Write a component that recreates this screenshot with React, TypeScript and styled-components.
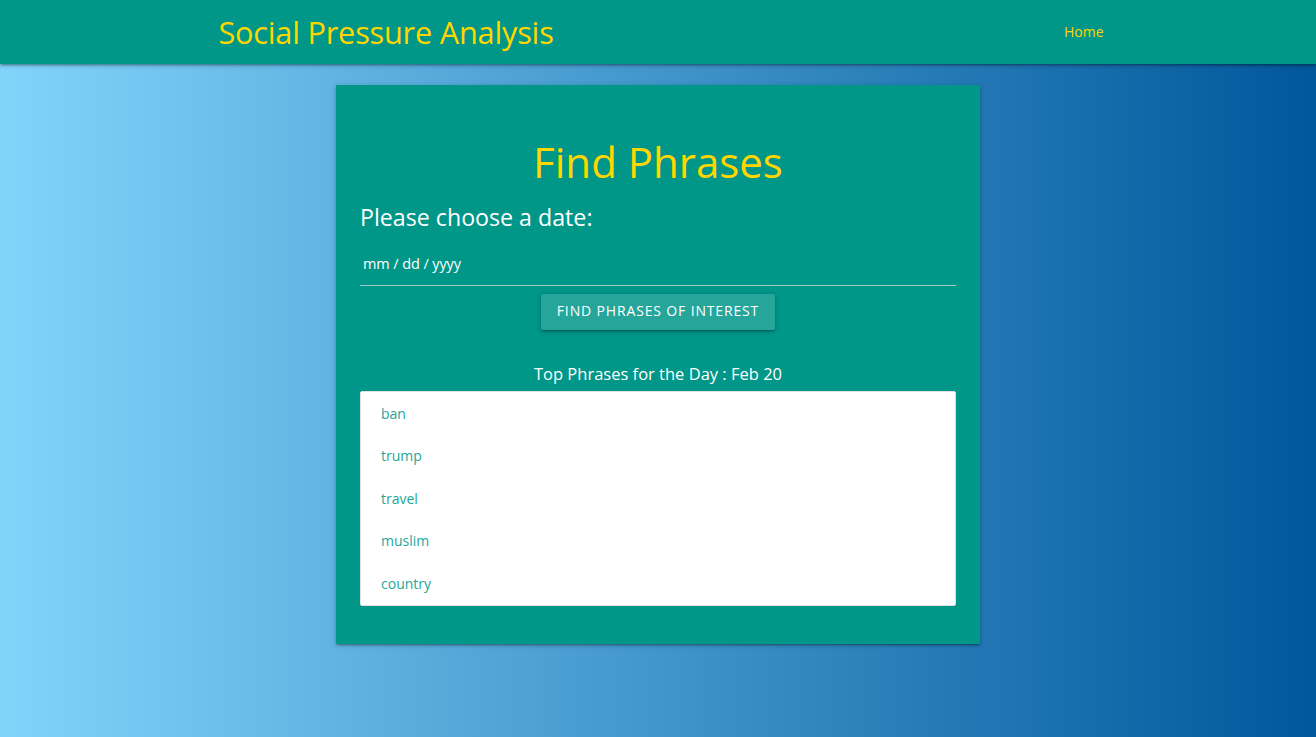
import React from 'react';
import styled, { createGlobalStyle } from 'styled-components';

const GlobalStyle = createGlobalStyle`
  html, body {
    margin: 0;
    padding: 0;
    min-height: 100%;
  }
  body {
    font-family: "Open Sans", "Noto Sans", sans-serif;
    background: linear-gradient(to right, #81d4fa 0%, #01579b 100%);
    min-height: 737px;
  }
  * {
    box-sizing: border-box;
  }
`;

const Nav = styled.nav`
  height: 64px;
  background-color: #009688;
  box-shadow: 0 2px 2px 0 rgba(0, 0, 0, 0.14), 0 3px 1px -2px rgba(0, 0, 0, 0.12),
    0 1px 5px 0 rgba(0, 0, 0, 0.2);
`;

const NavWrapper = styled.div`
  width: 70%;
  margin: 0 auto;
  height: 100%;
  display: flex;
  align-items: center;
  justify-content: space-between;
  padding-left: 21px;
`;

const Brand = styled.a`
  color: #ffd600;
  font-size: 30.7px;
  letter-spacing: -0.2px;
  text-decoration: none;
  line-height: 64px;
`;

const NavLink = styled.a`
  color: #ffd600;
  font-size: 14px;
  text-decoration: none;
  padding: 0 15px;
  line-height: 64px;
`;

const Main = styled.main`
  display: flex;
  justify-content: center;
  padding-top: 21px;
`;

const Card = styled.section`
  width: 644px;
  background-color: #009688;
  padding: 44px 24px 38px;
  box-shadow: 0 2px 2px 0 rgba(0, 0, 0, 0.14), 0 3px 1px -2px rgba(0, 0, 0, 0.12),
    0 1px 5px 0 rgba(0, 0, 0, 0.2);
  display: flex;
  flex-direction: column;
`;

const Title = styled.h1`
  margin: 0;
  text-align: center;
  color: #ffd600;
  font-size: 42px;
  font-weight: 400;
  line-height: 66px;
`;

const Prompt = styled.h4`
  margin: 0;
  color: #fff;
  font-size: 23.2px;
  font-weight: 400;
  line-height: 44px;
`;

const DateField = styled.div`
  height: 47px;
  border-bottom: 1px solid #9ecbc4;
  display: flex;
  align-items: center;
  padding: 3px 0 0 3px;
  color: #fff;
  font-size: 14.5px;
  letter-spacing: -0.1px;
`;

const Button = styled.button`
  align-self: center;
  margin-top: 8px;
  height: 36px;
  padding: 0 16px 3px;
  border: none;
  border-radius: 2px;
  background-color: #26a69a;
  color: #fff;
  font-family: inherit;
  font-size: 14px;
  letter-spacing: 0.85px;
  text-transform: uppercase;
  box-shadow: 0 2px 2px 0 rgba(0, 0, 0, 0.14), 0 3px 1px -2px rgba(0, 0, 0, 0.12),
    0 1px 5px 0 rgba(0, 0, 0, 0.2);
`;

const Caption = styled.p`
  margin: 32px 0 5px;
  text-align: center;
  color: #fff;
  font-size: 16.5px;
  line-height: 24px;
`;

const Collection = styled.ul`
  list-style: none;
  margin: 0;
  padding: 0;
  background: #fff;
  border: 1px solid #e0e0e0;
  border-radius: 2px;
`;

const Item = styled.li`
  padding: 0 20px;
  height: 42.5px;
  display: flex;
  align-items: center;
  color: #26a69a;
  font-size: 14px;
`;

const phrases = ['ban', 'trump', 'travel', 'muslim', 'country'];

export default function App() {
  return (
    <>
      <GlobalStyle />
      <Nav>
        <NavWrapper>
          <Brand href="#">Social Pressure Analysis</Brand>
          <NavLink href="#">Home</NavLink>
        </NavWrapper>
      </Nav>
      <Main>
        <Card>
          <Title>Find Phrases</Title>
          <Prompt>Please choose a date:</Prompt>
          <DateField>mm / dd / yyyy</DateField>
          <Button>Find Phrases of Interest</Button>
          <Caption>Top Phrases for the Day : Feb 20</Caption>
          <Collection>
            {phrases.map((p) => (
              <Item key={p}>{p}</Item>
            ))}
          </Collection>
        </Card>
      </Main>
    </>
  );
}
